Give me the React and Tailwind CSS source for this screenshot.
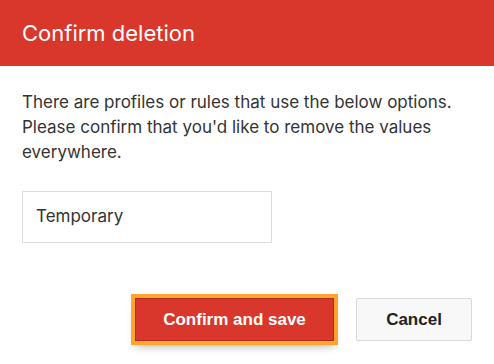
export default function App() {
  return (
    <div className="w-[494px] h-[364px] bg-white overflow-hidden" style={{ fontFamily: "Inter, 'Noto Sans', sans-serif" }}>
      <div className="h-[66px] bg-[#d9372b] flex items-center px-[22px]">
        <span className="text-white text-[22px] leading-none">Confirm deletion</span>
      </div>
      <div className="px-[22px] pt-[24px]">
        <p className="text-[#333333] text-[17px] leading-[25px]">
          There are profiles or rules that use the below options. Please confirm that you'd like to remove the values everywhere.
        </p>
        <div className="mt-[26px] w-[250px] h-[52px] border border-[#dedede] flex items-center px-[13px] text-[17px] text-[#333333]">
          Temporary
        </div>
        <div className="mt-[55px] flex justify-end gap-[22px]">
          <button
            className="h-[43px] w-[199px] bg-[#d9372b] border border-[#b22a20] text-white font-bold text-[17px] shadow-[0_0_0_4px_#ffa52e,0_6px_8px_rgba(0,0,0,0.25)]"
            style={{ fontFamily: "'Liberation Sans', Arial, sans-serif" }}
          >
            Confirm and save
          </button>
          <button
            className="h-[43px] w-[116px] bg-[#f8f8f8] border border-[#d9d9d9] rounded-[2px] text-[#222222] font-bold text-[17px]"
            style={{ fontFamily: "'Liberation Sans', Arial, sans-serif" }}
          >
            Cancel
          </button>
        </div>
      </div>
    </div>
  );
}
